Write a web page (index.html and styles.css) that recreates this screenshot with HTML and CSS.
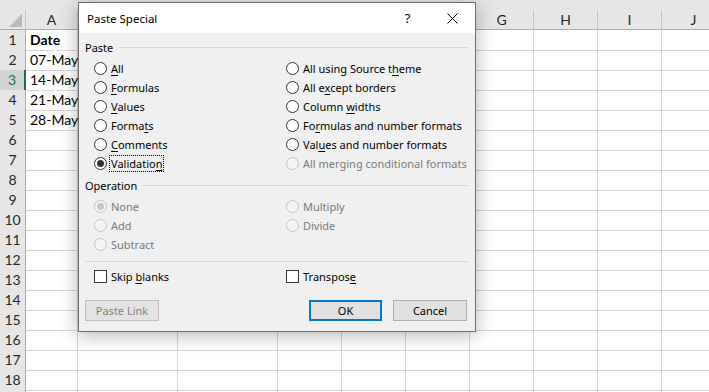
FILE: index.html
```html
<!DOCTYPE html>
<html lang="en">
<head>
    <meta charset="UTF-8">
    <meta name="viewport" content="width=device-width, initial-scale=1.0">
    <title>Paste Special</title>
    <link rel="stylesheet" href="styles.css">
</head>
<body>
    <div class="sheet">
        <div class="row head">
            <div class="corner"><span class="tri"></span></div>
            <div class="col">A</div><div class="col"></div><div class="col"></div><div class="col"></div><div class="col"></div>
            <div class="col"></div><div class="col">G</div><div class="col">H</div><div class="col">I</div><div class="col">J</div>
        </div>
        <div class="row"><div class="rh">1</div><div class="cell bold">Date</div><div class="cell"></div><div class="cell"></div><div class="cell"></div><div class="cell"></div><div class="cell"></div><div class="cell"></div><div class="cell"></div><div class="cell"></div><div class="cell"></div></div>
        <div class="row"><div class="rh">2</div><div class="cell">07-May</div><div class="cell"></div><div class="cell"></div><div class="cell"></div><div class="cell"></div><div class="cell"></div><div class="cell"></div><div class="cell"></div><div class="cell"></div><div class="cell"></div></div>
        <div class="row"><div class="rh sel">3</div><div class="cell active">14-May</div><div class="cell"></div><div class="cell"></div><div class="cell"></div><div class="cell"></div><div class="cell"></div><div class="cell"></div><div class="cell"></div><div class="cell"></div><div class="cell"></div></div>
        <div class="row"><div class="rh">4</div><div class="cell">21-May</div><div class="cell"></div><div class="cell"></div><div class="cell"></div><div class="cell"></div><div class="cell"></div><div class="cell"></div><div class="cell"></div><div class="cell"></div><div class="cell"></div></div>
        <div class="row"><div class="rh">5</div><div class="cell">28-May</div><div class="cell"></div><div class="cell"></div><div class="cell"></div><div class="cell"></div><div class="cell"></div><div class="cell"></div><div class="cell"></div><div class="cell"></div><div class="cell"></div></div>
        <div class="row"><div class="rh">6</div><div class="cell"></div><div class="cell"></div><div class="cell"></div><div class="cell"></div><div class="cell"></div><div class="cell"></div><div class="cell"></div><div class="cell"></div><div class="cell"></div><div class="cell"></div></div>
        <div class="row"><div class="rh">7</div><div class="cell"></div><div class="cell"></div><div class="cell"></div><div class="cell"></div><div class="cell"></div><div class="cell"></div><div class="cell"></div><div class="cell"></div><div class="cell"></div><div class="cell"></div></div>
        <div class="row"><div class="rh">8</div><div class="cell"></div><div class="cell"></div><div class="cell"></div><div class="cell"></div><div class="cell"></div><div class="cell"></div><div class="cell"></div><div class="cell"></div><div class="cell"></div><div class="cell"></div></div>
        <div class="row"><div class="rh">9</div><div class="cell"></div><div class="cell"></div><div class="cell"></div><div class="cell"></div><div class="cell"></div><div class="cell"></div><div class="cell"></div><div class="cell"></div><div class="cell"></div><div class="cell"></div></div>
        <div class="row"><div class="rh">10</div><div class="cell"></div><div class="cell"></div><div class="cell"></div><div class="cell"></div><div class="cell"></div><div class="cell"></div><div class="cell"></div><div class="cell"></div><div class="cell"></div><div class="cell"></div></div>
        <div class="row"><div class="rh">11</div><div class="cell"></div><div class="cell"></div><div class="cell"></div><div class="cell"></div><div class="cell"></div><div class="cell"></div><div class="cell"></div><div class="cell"></div><div class="cell"></div><div class="cell"></div></div>
        <div class="row"><div class="rh">12</div><div class="cell"></div><div class="cell"></div><div class="cell"></div><div class="cell"></div><div class="cell"></div><div class="cell"></div><div class="cell"></div><div class="cell"></div><div class="cell"></div><div class="cell"></div></div>
        <div class="row"><div class="rh">13</div><div class="cell"></div><div class="cell"></div><div class="cell"></div><div class="cell"></div><div class="cell"></div><div class="cell"></div><div class="cell"></div><div class="cell"></div><div class="cell"></div><div class="cell"></div></div>
        <div class="row"><div class="rh">14</div><div class="cell"></div><div class="cell"></div><div class="cell"></div><div class="cell"></div><div class="cell"></div><div class="cell"></div><div class="cell"></div><div class="cell"></div><div class="cell"></div><div class="cell"></div></div>
        <div class="row"><div class="rh">15</div><div class="cell"></div><div class="cell"></div><div class="cell"></div><div class="cell"></div><div class="cell"></div><div class="cell"></div><div class="cell"></div><div class="cell"></div><div class="cell"></div><div class="cell"></div></div>
        <div class="row"><div class="rh">16</div><div class="cell"></div><div class="cell"></div><div class="cell"></div><div class="cell"></div><div class="cell"></div><div class="cell"></div><div class="cell"></div><div class="cell"></div><div class="cell"></div><div class="cell"></div></div>
        <div class="row"><div class="rh">17</div><div class="cell"></div><div class="cell"></div><div class="cell"></div><div class="cell"></div><div class="cell"></div><div class="cell"></div><div class="cell"></div><div class="cell"></div><div class="cell"></div><div class="cell"></div></div>
        <div class="row"><div class="rh">18</div><div class="cell"></div><div class="cell"></div><div class="cell"></div><div class="cell"></div><div class="cell"></div><div class="cell"></div><div class="cell"></div><div class="cell"></div><div class="cell"></div><div class="cell"></div></div>
        <div class="row"><div class="rh"></div><div class="cell"></div><div class="cell"></div><div class="cell"></div><div class="cell"></div><div class="cell"></div><div class="cell"></div><div class="cell"></div><div class="cell"></div><div class="cell"></div><div class="cell"></div></div>
    </div>

    <div class="dialog">
        <div class="titlebar">
            <span class="title">Paste Special</span>
            <span class="tbtn">?</span>
            <span class="tbtn">
                <svg width="11" height="11" viewBox="0 0 11 11"><path d="M0.5 0.5L10.5 10.5M10.5 0.5L0.5 10.5" stroke="#000" stroke-width="1"/></svg>
            </span>
        </div>
        <div class="body">
            <div class="group"><span>Paste</span><span class="line"></span></div>
            <div class="options">
                <div class="opt"><span class="radio"></span><span><u>A</u>ll</span></div>
                <div class="opt"><span class="radio"></span><span>All using Source t<u>h</u>eme</span></div>
                <div class="opt"><span class="radio"></span><span><u>F</u>ormulas</span></div>
                <div class="opt"><span class="radio"></span><span>All e<u>x</u>cept borders</span></div>
                <div class="opt"><span class="radio"></span><span><u>V</u>alues</span></div>
                <div class="opt"><span class="radio"></span><span>Column <u>w</u>idths</span></div>
                <div class="opt"><span class="radio"></span><span>Forma<u>t</u>s</span></div>
                <div class="opt"><span class="radio"></span><span>Fo<u>r</u>mulas and number formats</span></div>
                <div class="opt"><span class="radio"></span><span><u>C</u>omments</span></div>
                <div class="opt"><span class="radio"></span><span>Val<u>u</u>es and number formats</span></div>
                <div class="opt"><span class="radio checked"></span><span class="focus">Validatio<u>n</u></span></div>
                <div class="opt off"><span class="radio"></span><span>All merging conditional formats</span></div>
            </div>
            <div class="group op"><span>Operation</span><span class="line"></span></div>
            <div class="options">
                <div class="opt off"><span class="radio checked"></span><span>None</span></div>
                <div class="opt off"><span class="radio"></span><span>Multiply</span></div>
                <div class="opt off"><span class="radio"></span><span>Add</span></div>
                <div class="opt off"><span class="radio"></span><span>Divide</span></div>
                <div class="opt off"><span class="radio"></span><span>Subtract</span></div>
            </div>
            <div class="sep"></div>
            <div class="options checks">
                <div class="opt"><span class="box"></span><span>Skip <u>b</u>lanks</span></div>
                <div class="opt"><span class="box"></span><span>Transpos<u>e</u></span></div>
            </div>
            <div class="buttons">
                <button class="btn" disabled>Paste Link</button>
                <span class="spacer"></span>
                <button class="btn default">OK</button>
                <button class="btn">Cancel</button>
            </div>
        </div>
    </div>
</body>
</html>
```

FILE: styles.css
```css
body {
    margin: 0;
    width: 709px;
    height: 392px;
    overflow: hidden;
    background-color: #ffffff;
    font-family: Lato, "Liberation Sans", sans-serif;
    position: relative;
}

.sheet {
    width: 726px;
}

.row {
    display: grid;
    grid-template-columns: 26px 52px 100px 100px 64px 64px 64px 64px 64px 64px 64px;
    height: 20px;
}

.head {
    height: 30px;
    padding-top: 10px;
    box-sizing: border-box;
    background-color: #e6e6e6;
    border-bottom: 1px solid #ababab;
}

.corner {
    border-right: 1px solid #c6c6c6;
    position: relative;
}

.tri {
    position: absolute;
    right: 3px;
    bottom: 3px;
    width: 0;
    height: 0;
    border-left: 13px solid transparent;
    border-bottom: 13px solid #b9b9b9;
}

.col {
    border-right: 1px solid #c6c6c6;
    font-size: 14px;
    line-height: 20px;
    text-align: center;
    color: #262626;
}

.rh {
    background-color: #e6e6e6;
    border-right: 1px solid #ababab;
    border-bottom: 1px solid #c6c6c6;
    box-sizing: border-box;
    font-size: 14px;
    line-height: 20px;
    text-align: center;
    color: #262626;
}

.rh.sel {
    background-color: #d2d2d2;
    color: #217346;
    border-right: 2px solid #217346;
}

.cell {
    border-right: 1px solid #d4d4d4;
    border-bottom: 1px solid #d4d4d4;
    box-sizing: border-box;
    font-size: 14px;
    line-height: 20px;
    padding-left: 4px;
    color: #000;
    white-space: nowrap;
}

.bold {
    font-weight: bold;
}

/* dialog */
.dialog {
    position: absolute;
    left: 78px;
    top: 2px;
    width: 398px;
    height: 330px;
    box-sizing: border-box;
    border: 1px solid #6f6f6f;
    background-color: #f0f0f0;
    box-shadow: 0 3px 18px rgba(0, 0, 0, 0.3);
    font-family: "Noto Sans", sans-serif;
    font-size: 11px;
    color: #000;
}

.titlebar {
    display: flex;
    align-items: center;
    height: 30px;
    background-color: #ffffff;
}

.title {
    flex: 1;
    padding-left: 8px;
    font-size: 11.5px;
}

.tbtn {
    width: 45px;
    height: 30px;
    display: flex;
    align-items: center;
    justify-content: center;
    font-size: 13px;
}

.body {
    padding: 7px 7px 0 6px;
}

.group {
    display: flex;
    align-items: center;
    height: 16px;
    line-height: 16px;
}

.group .line {
    flex: 1;
    height: 1px;
    background-color: #d9d9d9;
    margin-left: 6px;
    margin-top: -1px;
}

.group.op {
    margin-top: 5px;
}

.options {
    display: grid;
    grid-template-columns: 192px 1fr;
    padding-left: 9px;
    margin-top: 3px;
}

.opt {
    display: flex;
    align-items: center;
    height: 19px;
    white-space: nowrap;
}

.opt u {
    text-decoration: underline;
    text-underline-offset: 2px;
}

.opt.off {
    color: #7a7a7a;
}

.radio {
    width: 13px;
    height: 13px;
    box-sizing: border-box;
    border: 1px solid #333333;
    border-radius: 50%;
    background-color: #ffffff;
    margin-right: 4px;
    display: flex;
    align-items: center;
    justify-content: center;
}

.radio.checked::after {
    content: "";
    width: 7px;
    height: 7px;
    border-radius: 50%;
    background-color: #333333;
}

.off .radio {
    border-color: #c4c4c4;
    background-color: #f4f4f4;
}

.off .radio.checked::after {
    background-color: #c4c4c4;
}

.focus {
    outline: 1px dotted #000;
    outline-offset: 0;
    padding: 0 1px;
    margin-left: -1px;
    line-height: 15px;
}

.sep {
    height: 1px;
    background-color: #d9d9d9;
    margin-top: 7px;
}

.checks {
    margin-top: 5px;
}

.box {
    width: 13px;
    height: 13px;
    box-sizing: border-box;
    border: 1px solid #333333;
    background-color: #ffffff;
    margin-right: 4px;
}

.buttons {
    display: flex;
    gap: 11px;
    margin-top: 14px;
    padding-right: 1px;
}

.spacer {
    flex: 1;
}

.btn {
    width: 74px;
    height: 21px;
    box-sizing: border-box;
    border: 1px solid #adadad;
    background-color: #e1e1e1;
    font-family: "Noto Sans", sans-serif;
    font-size: 11px;
    color: #000;
    padding: 0;
}

.btn:disabled {
    color: #838383;
    border-color: #bfbfbf;
    background-color: #e3e3e3;
}

.btn.default {
    width: 73px;
    border: 2px solid #0078d7;
}
```
